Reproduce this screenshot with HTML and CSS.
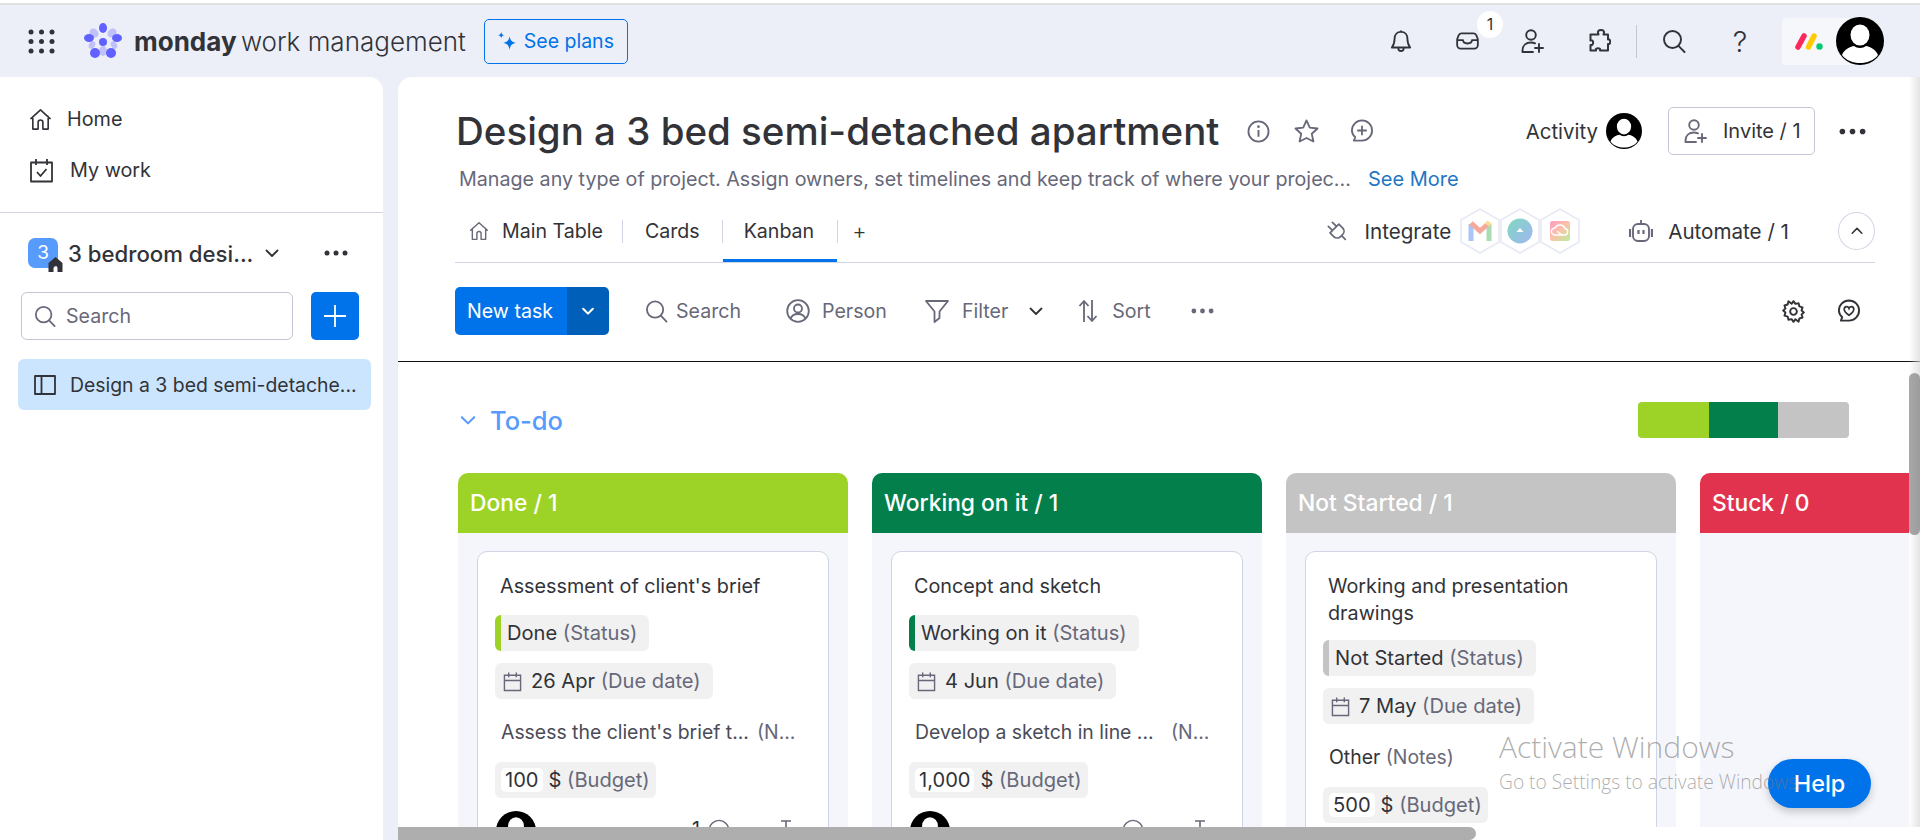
FILE: index.html
```html
<!DOCTYPE html>
<html lang="en">
<head>
  <meta charset="UTF-8">
  <title>monday work management</title>
  <link rel="stylesheet" href="styles.css">
</head>
<body>
  <svg class="defs" width="0" height="0">
    <symbol id="i-home" viewBox="0 0 24 24"><path d="M2 11 12 2l10 9M4 9v13h5.500v-7a2.500 2.500 0 0 1 5 0v7H20V9" fill="none" stroke="currentColor" stroke-width="1.700" stroke-linejoin="round" stroke-linecap="round"/></symbol>
    <symbol id="i-search" viewBox="0 0 24 24"><circle cx="10.500" cy="10.500" r="8.500" fill="none" stroke="currentColor" stroke-width="1.900"/><path d="m16.500 16.800 6 6.200" stroke="currentColor" stroke-width="1.900" stroke-linecap="round"/></symbol>
    <symbol id="i-dots" viewBox="0 0 24 6"><circle cx="3" cy="3" r="2.500" fill="currentColor"/><circle cx="12" cy="3" r="2.500" fill="currentColor"/><circle cx="21" cy="3" r="2.500" fill="currentColor"/></symbol>
    <symbol id="i-chev" viewBox="0 0 16 16"><path d="m2.500 5.500 5.500 5.500 5.500-5.500" fill="none" stroke="currentColor" stroke-width="1.800" stroke-linecap="round" stroke-linejoin="round"/></symbol>
    <symbol id="i-invite" viewBox="0 0 24 24"><circle cx="10" cy="6" r="4.800" fill="none" stroke="currentColor" stroke-width="1.900"/><path d="M1.500 23v-1.500C1.500 16.500 5 13.500 10 13.500c1.500 0 2.800.3 4 .8M1.500 23H12M18 15v8M14 19h8" fill="none" stroke="currentColor" stroke-width="1.900" stroke-linecap="round"/></symbol>
    <symbol id="i-user" viewBox="0 0 48 48"><circle cx="24" cy="24" r="24" fill="#000"/><ellipse cx="24" cy="18" rx="9.500" ry="10.500" fill="#fff"/><path d="M6 38c2-6 9-8.500 12-9 3 2.500 9 2.500 12 0 3 .5 10 3 12 9-4 5.500-11 8-18 8s-14-2.500-18-8z" fill="#fff"/></symbol>
    <symbol id="i-cal" viewBox="0 0 20 22"><path d="M1.500 4.500h17v16h-17zM1.500 10h17M6 1.500v5M14 1.500v5" fill="none" stroke="currentColor" stroke-width="1.500"/></symbol>
    <symbol id="i-hex" viewBox="0 0 40 46"><path d="M20 1 39 12v22L20 45 1 34V12z" fill="#fff" stroke="#e8eaf5" stroke-width="1.800"/></symbol>
  </svg>

  <div class="top-strip"></div>

  <header class="topbar">
    <svg class="apps" viewBox="0 0 27 25"><g fill="#323338"><circle cx="3" cy="3" r="2.500"/><circle cx="13.500" cy="3" r="2.500"/><circle cx="24" cy="3" r="2.500"/><circle cx="3" cy="12.500" r="2.500"/><circle cx="13.500" cy="12.500" r="2.500"/><circle cx="24" cy="12.500" r="2.500"/><circle cx="3" cy="22" r="2.500"/><circle cx="13.500" cy="22" r="2.500"/><circle cx="24" cy="22" r="2.500"/></g></svg>
    <svg class="brand-mark" viewBox="0 0 38 36">
      <g fill="#c0c0fb"><ellipse cx="10" cy="10" rx="4" ry="5" transform="rotate(-50 10 10)"/><ellipse cx="28" cy="10" rx="4" ry="5" transform="rotate(50 28 10)"/><ellipse cx="19" cy="28" rx="4" ry="5"/><ellipse cx="8" cy="22" rx="3" ry="4" transform="rotate(30 8 22)"/><ellipse cx="30" cy="22" rx="3" ry="4" transform="rotate(-30 30 22)"/></g>
      <g fill="#6161ff"><ellipse cx="19" cy="5" rx="4" ry="5"/><ellipse cx="5" cy="15" rx="5" ry="4"/><ellipse cx="33" cy="15" rx="5" ry="4"/><ellipse cx="11" cy="30" rx="5" ry="5"/><ellipse cx="27" cy="30" rx="5" ry="5"/><circle cx="19" cy="19" r="4"/></g>
    </svg>
    <div class="brand"><b>monday</b> work management</div>
    <button class="see-plans">
      <svg viewBox="0 0 20 20" width="21" height="21"><path d="M12 5c.8 4 2 5.300 6 6.300-4 1-5.200 2.400-6 6.700-.8-4.300-2-5.700-6-6.700 4-1 5.200-2.300 6-6.300zM4 1c.4 2 1 2.600 3 3-2 .4-2.600 1-3 3-.4-2-1-2.600-3-3 2-.4 2.600-1 3-3z" fill="#0073ea"/></svg>
      See plans
    </button>

    <div class="top-actions">
      <span class="top-icon"><svg viewBox="0 0 24 26" width="22" height="25"><path d="M12 2.500c-4.500 0-7 3.500-7 7.500 0 4.500-1 7-3 9.500h20c-2-2.500-3-5-3-9.500 0-4-2.500-7.500-7-7.500zM12 1v1.500M9 20c0 4.500 6 4.500 6 0" fill="none" stroke="currentColor" stroke-width="2" stroke-linejoin="round"/></svg></span>
      <span class="top-icon inbox">
        <svg viewBox="0 0 26 20" width="25" height="18"><path d="M6 1.500h14c1.500 0 2.300.8 3 2.500l1.500 4v6.500a4 4 0 0 1-4 4h-15a4 4 0 0 1-4-4V8L3 4c.7-1.700 1.500-2.500 3-2.500zM1.500 9H8c0 5 10 5 10 0h6.500" fill="none" stroke="currentColor" stroke-width="2" stroke-linejoin="round"/></svg>
        <span class="badge">1</span>
      </span>
      <span class="top-icon"><svg width="24" height="24"><use href="#i-invite"/></svg></span>
      <span class="top-icon"><svg viewBox="0 0 24 24" width="24" height="24"><path d="M9 5.500h2.500C10 2 12 1 14 1s4 1 2.500 4.500H21v5c3-1.500 3 6 0 4.500v6.500H13c1.500-3-5.500-3-4 0H3.500v-5.500C7 17 7 10 3.500 11.500V5.500z" fill="none" stroke="currentColor" stroke-width="2" stroke-linejoin="round"/></svg></span>
      <span class="top-sep"></span>
      <span class="top-icon"><svg width="24" height="24"><use href="#i-search"/></svg></span>
      <span class="top-icon help-mark">?</span>
      <div class="account">
        <svg class="account-logo" viewBox="0 0 28 17"><path d="M3 14 9 3" stroke="#fb275d" stroke-width="5.500" stroke-linecap="round"/><path d="M13.500 14 19 3" stroke="#ffcb00" stroke-width="5.500" stroke-linecap="round"/><circle cx="24.500" cy="13.500" r="3.200" fill="#00ca72"/></svg>
        <svg class="account-user"><use href="#i-user"/></svg>
      </div>
    </div>
  </header>

  <div class="layout">
    <aside class="sidebar">
      <a class="side-link">
        <svg width="23" height="23"><use href="#i-home"/></svg>
        Home
      </a>
      <a class="side-link work">
        <svg viewBox="0 0 25 25" width="25" height="25"><path d="M2 4.500h21v19H2zM7 1v6M18 1v6M8 14l3.500 4 6-7" fill="none" stroke="currentColor" stroke-width="1.800" stroke-linejoin="round"/></svg>
        My work
      </a>
      <div class="side-divider"></div>

      <div class="workspace">
        <span class="ws-badge">3
          <svg class="ws-home" viewBox="0 0 14 15"><path d="M7 0 14 6v9H9v-4a2 2 0 0 0-4 0v4H0V6z" fill="#323338"/></svg>
        </span>
        <span class="ws-name">3 bedroom desi...</span>
        <svg class="ws-chev" width="16" height="16"><use href="#i-chev"/></svg>
        <svg class="ws-dots" width="24" height="6"><use href="#i-dots"/></svg>
      </div>

      <div class="side-search">
        <div class="search-box">
          <svg width="22" height="24"><use href="#i-search"/></svg>
          Search
        </div>
        <button class="add-btn"><svg viewBox="0 0 24 24" width="24" height="24"><path d="M12 1v22M1 12h22" stroke="#fff" stroke-width="1.800"/></svg></button>
      </div>

      <div class="board-item">
        <svg viewBox="0 0 22 20" width="22" height="20"><path d="M1 1h20v18H1zM7.500 1v18" fill="none" stroke="currentColor" stroke-width="1.800" stroke-linejoin="round"/></svg>
        <span>Design a 3 bed semi-detache...</span>
      </div>
    </aside>

    <main class="main">
      <section class="board-head">
        <div class="title-row">
          <h1>Design a 3 bed semi-detached apartment</h1>
          <svg class="head-icon" viewBox="0 0 24 24" width="23" height="23"><circle cx="12" cy="12" r="10.500" fill="none" stroke="currentColor" stroke-width="1.900"/><path d="M12 10.500v7" stroke="currentColor" stroke-width="2"/><circle cx="12" cy="7" r="1.400" fill="currentColor"/></svg>
          <svg class="head-icon star" viewBox="0 0 26 25" width="25" height="24"><path d="m13 1.500 3.400 7.500 8.100.9-6 5.500 1.700 8L13 19.800l-7.200 3.600 1.700-8-6-5.500 8.100-.9z" fill="none" stroke="currentColor" stroke-width="1.900" stroke-linejoin="round"/></svg>
          <svg class="head-icon bubble" viewBox="0 0 24 25" width="24" height="24"><path d="M12 1.500a10.500 10.500 0 0 1 0 21H3.500l1.500-3.500C2.800 17 1.500 14.500 1.500 12A10.500 10.500 0 0 1 12 1.500zM12 7v10M7 12h10" fill="none" stroke="currentColor" stroke-width="1.900" stroke-linejoin="round"/></svg>
          <div class="title-actions">
            <span class="activity">Activity</span>
            <svg class="activity-user"><use href="#i-user"/></svg>
            <button class="invite-btn"><svg width="24" height="24"><use href="#i-invite"/></svg>Invite / 1</button>
            <svg class="more-dots" width="27" height="7"><use href="#i-dots"/></svg>
          </div>
        </div>
        <p class="description">
          <span>Manage any type of project. Assign owners, set timelines and keep track of where your projec...</span>
          <a>See More</a>
        </p>
        <nav class="tabs">
          <a class="tab first"><svg width="20" height="20"><use href="#i-home"/></svg>Main Table</a>
          <span class="tab-sep"></span>
          <a class="tab">Cards</a>
          <span class="tab-sep"></span>
          <a class="tab active">Kanban</a>
          <span class="tab-sep"></span>
          <a class="tab plus">+</a>

          <div class="tab-tools">
            <svg viewBox="0 0 24 24" width="23" height="23"><g transform="rotate(-45 12 12)" fill="none" stroke="currentColor" stroke-width="1.800" stroke-linecap="round" stroke-linejoin="round"><path d="M5.500 7.500h13V13a5 5 0 0 1-5 5h-3a5 5 0 0 1-5-5zM9 1.500v6M15 1.500v6M12 18v5.500"/></g></svg>
            <span class="tool-label">Integrate</span>
            <div class="hexes">
              <span class="hex"><svg viewBox="0 0 40 46"><use href="#i-hex"/><path d="M11 33V16" stroke="#a9c6f7" stroke-width="5"/><path d="M29 33V16" stroke="#a9dcb4" stroke-width="5"/><path d="m11 15 9 8 9-8" fill="none" stroke="#f5a99d" stroke-width="5"/><path d="m27 17 2.500-3" stroke="#fbdf8e" stroke-width="5"/></svg></span>
              <span class="hex"><svg viewBox="0 0 40 46"><defs><linearGradient id="g-drive" x1="0" y1="0" x2="1" y2="1"><stop offset="0" stop-color="#7fd8c0"/><stop offset="1" stop-color="#a0b6f3"/></linearGradient></defs><use href="#i-hex"/><ellipse cx="20" cy="23" rx="12.500" ry="12.500" fill="url(#g-drive)"/><path d="m20 20 3.500 4h-7z" fill="#fff"/></svg></span>
              <span class="hex"><svg viewBox="0 0 40 46"><defs><linearGradient id="g-cloud" x1="0" y1="0" x2="1" y2="1"><stop offset="0" stop-color="#fb9cc4"/><stop offset=".5" stop-color="#fbc3a8"/><stop offset="1" stop-color="#b6ef9c"/></linearGradient></defs><use href="#i-hex"/><rect x="10" y="13" width="20" height="20" rx="2.500" fill="url(#g-cloud)"/><path d="M15 27a3.500 3.500 0 0 1 0-7 5.500 5.500 0 0 1 10 .5 3.300 3.300 0 0 1 0 6.500zM17 23.500c2 0 3 3.500 6 3.500" fill="none" stroke="#fff" stroke-width="1.400"/></svg></span>
            </div>
            <svg class="robot" viewBox="0 0 24 22" width="24" height="22"><path d="M12 0v4" stroke="currentColor" stroke-width="1.800"/><rect x="4" y="4" width="16" height="17" rx="5" fill="none" stroke="currentColor" stroke-width="1.900"/><path d="M1 9v8M23 9v8" stroke="currentColor" stroke-width="2.200"/><path d="M9.500 10v4M14.500 10v4" stroke="currentColor" stroke-width="2.200"/></svg>
            <span class="tool-label">Automate / 1</span>
            <button class="collapse"><svg viewBox="0 0 16 16" width="14" height="14"><path d="m2.500 10.500 5.500-5.500 5.500 5.500" fill="none" stroke="#323338" stroke-width="1.800" stroke-linecap="round" stroke-linejoin="round"/></svg></button>
          </div>
        </nav>
      </section>

      <section class="toolbar">
        <div class="new-task"><span class="nt-label">New task</span><span class="nt-arrow"><svg width="14" height="14" viewBox="0 0 16 16"><path d="m2.500 5.500 5.500 5.500 5.500-5.500" fill="none" stroke="#fff" stroke-width="2.400" stroke-linecap="round" stroke-linejoin="round"/></svg></span></div>
        <a class="tool t-search"><svg width="23" height="24"><use href="#i-search"/></svg>Search</a>
        <a class="tool t-person"><svg viewBox="0 0 24 24" width="24" height="24"><circle cx="12" cy="12" r="10.800" fill="none" stroke="currentColor" stroke-width="1.800"/><circle cx="12" cy="9.500" r="4" fill="none" stroke="currentColor" stroke-width="1.800"/><path d="M4.500 20c1-3.500 4-5 7.500-5s6.500 1.500 7.500 5" fill="none" stroke="currentColor" stroke-width="1.800"/></svg>Person</a>
        <a class="tool t-filter"><svg viewBox="0 0 24 24" width="24" height="24"><path d="M1 2h22l-8.500 10.500V19L9.500 23V12.500z" fill="none" stroke="currentColor" stroke-width="1.800" stroke-linejoin="round"/></svg>Filter</a>
        <svg class="t-chev" width="16" height="16"><use href="#i-chev"/></svg>
        <a class="tool t-sort"><svg viewBox="0 0 20 24" width="20" height="24"><path d="M6 23V2M1.500 7 6 2l4.500 5M14 1v21M9.500 17l4.500 5 4.500-5" fill="none" stroke="currentColor" stroke-width="1.800" stroke-linejoin="round"/></svg>Sort</a>
        <svg class="t-dots" width="23" height="6"><use href="#i-dots"/></svg>
        <svg class="t-gear" viewBox="0 0 24 24" width="23" height="23"><path d="M12 1.200 14 4l3.300-.6.800 3.300 3.300 1-1 3.300 2.400 2-2.400 2 1 3.300-3.300 1-.8 3.300L14 20l-2 2.800L10 20l-3.300.6-.8-3.300-3.300-1 1-3.300-2.400-2 2.400-2-1-3.300 3.300-1 .8-3.300L10 4z" fill="none" stroke="#323338" stroke-width="2" stroke-linejoin="round"/><circle cx="12" cy="12" r="3.500" fill="none" stroke="#323338" stroke-width="2"/></svg>
        <svg class="t-feedback" viewBox="0 0 24 25" width="24" height="24"><path d="M12 1.500a10.500 10.500 0 0 1 0 21H3.500l1.500-3.500C2.800 17 1.500 14.500 1.500 12A10.500 10.500 0 0 1 12 1.500z" fill="none" stroke="#323338" stroke-width="2" stroke-linejoin="round"/><path d="M12 17c-3-2-5-4-5-6.200C7 9 8.300 8 9.500 8c1 0 2 .6 2.500 1.800C12.500 8.600 13.500 8 14.500 8 15.700 8 17 9 17 10.800 17 13 15 15 12 17z" fill="none" stroke="#323338" stroke-width="1.800"/></svg>
      </section>

      <section class="group-row">
        <svg class="group-chev" width="18" height="18"><use href="#i-chev"/></svg>
        <span class="group-name">To-do</span>
        <div class="group-progress"><span class="c-done"></span><span class="c-working"></span><span class="c-idle"></span></div>
      </section>

      <section class="columns">
        <div class="column">
          <div class="col-head c-done">Done / 1</div>
          <div class="col-body">
            <article class="card">
              <h3>Assessment of client's brief</h3>
              <div class="chip status"><i class="c-done"></i>Done&nbsp;<em>(Status)</em></div>
              <div class="chip date"><svg width="19" height="21"><use href="#i-cal"/></svg>26 Apr&nbsp;<em>(Due date)</em></div>
              <div class="note"><span class="note-text">Assess the client's brief t...</span><em>(N...</em></div>
              <div class="chip budget"><span class="amount">100</span>$&nbsp;<em>(Budget)</em></div>
              <div class="card-foot">
                <svg class="foot-user"><use href="#i-user"/></svg>
                <span class="foot-count">1</span>
                <svg class="foot-bubble" viewBox="0 0 24 24" width="22" height="22"><circle cx="12" cy="12" r="10.500" fill="none" stroke="#676879" stroke-width="1.600"/></svg>
                <svg class="foot-sub" viewBox="0 0 24 24" width="24" height="24"><path d="M1 2h10M6 2v18M13 9h10v10H13z" fill="none" stroke="#676879" stroke-width="1.600"/></svg>
              </div>
            </article>
          </div>
        </div>

        <div class="column">
          <div class="col-head c-working">Working on it / 1</div>
          <div class="col-body">
            <article class="card">
              <h3>Concept and sketch</h3>
              <div class="chip status"><i class="c-working"></i>Working on it&nbsp;<em>(Status)</em></div>
              <div class="chip date"><svg width="19" height="21"><use href="#i-cal"/></svg>4 Jun&nbsp;<em>(Due date)</em></div>
              <div class="note"><span class="note-text">Develop a sketch in line ...</span><em>(N...</em></div>
              <div class="chip budget"><span class="amount">1,000</span>$&nbsp;<em>(Budget)</em></div>
              <div class="card-foot">
                <svg class="foot-user"><use href="#i-user"/></svg>
                <span class="foot-count"></span>
                <svg class="foot-bubble" viewBox="0 0 24 24" width="22" height="22"><circle cx="12" cy="12" r="10.500" fill="none" stroke="#676879" stroke-width="1.600"/></svg>
                <svg class="foot-sub" viewBox="0 0 24 24" width="24" height="24"><path d="M1 2h10M6 2v18M13 9h10v10H13z" fill="none" stroke="#676879" stroke-width="1.600"/></svg>
              </div>
            </article>
          </div>
        </div>

        <div class="column">
          <div class="col-head c-idle">Not Started / 1</div>
          <div class="col-body">
            <article class="card">
              <h3>Working and presentation drawings</h3>
              <div class="chip status"><i class="c-idle"></i>Not Started&nbsp;<em>(Status)</em></div>
              <div class="chip date"><svg width="19" height="21"><use href="#i-cal"/></svg>7 May&nbsp;<em>(Due date)</em></div>
              <div class="note">Other&nbsp;<em>(Notes)</em></div>
              <div class="chip budget"><span class="amount">500</span>$&nbsp;<em>(Budget)</em></div>
            </article>
          </div>
        </div>

        <div class="column">
          <div class="col-head c-stuck">Stuck / 0</div>
          <div class="col-body"></div>
        </div>
      </section>

      <div class="vscroll"><span></span></div>
      <div class="hscroll"><span></span></div>
    </main>
  </div>

  <button class="help-btn">Help</button>
  <div class="watermark">
    <div class="wm-title">Activate Windows</div>
    <div class="wm-sub">Go to Settings to activate Windows.</div>
  </div>
</body>
</html>
```

FILE: styles.css
```css
* {
  box-sizing: border-box;
}

body {
  margin: 0;
  height: 840px;
  overflow: hidden;
  background-color: #eceff8;
  color: #323338;
  font-family: 'Inter', 'Noto Sans', sans-serif;
  font-size: 19.6px;
  position: relative;
}

button {
  font: inherit;
  color: inherit;
  background: none;
  border: none;
  padding: 0;
}

em {
  font-style: normal;
  color: #676879;
}

h1, h3, p {
  margin: 0;
  font-weight: 400;
}

.defs {
  position: absolute;
}

.top-strip {
  height: 5px;
  background-color: #fff;
  border-bottom: 2px solid #e1e1e1;
}

/* top bar */
.topbar {
  height: 72px;
  display: flex;
  align-items: center;
  padding: 0 36px 0 28px;
}

.apps {
  width: 27px;
  height: 25px;
  margin-right: 29px;
}

.brand-mark {
  width: 38px;
  height: 36px;
  margin-right: 12px;
}

.brand {
  font-size: 26px;
  font-weight: 300;
  white-space: nowrap;
  margin-right: 18px;
}

.brand b {
  font-weight: 700;
  margin-right: -3px;
}

.see-plans {
  width: 144px;
  height: 45px;
  border: 1px solid #0073ea;
  border-radius: 5px;
  color: #0073ea;
  display: flex;
  align-items: center;
  gap: 6px;
  padding-left: 12px;
  font-size: 19.5px;
}

.top-actions {
  margin-left: auto;
  display: flex;
  align-items: center;
}

.top-icon {
  width: 66px;
  display: flex;
  justify-content: center;
  align-items: center;
  position: relative;
}

.inbox .badge {
  position: absolute;
  left: 43px;
  top: -21px;
  width: 26px;
  height: 27px;
  border-radius: 50%;
  background-color: #fff;
  font-size: 16px;
  text-align: center;
  line-height: 26px;
}

.top-sep {
  width: 1px;
  height: 33px;
  background-color: #c3c6d4;
  margin: 0 4px;
}

.help-mark {
  font-size: 29px;
  font-weight: 300;
}

.account {
  width: 102px;
  height: 47px;
  margin-left: 9px;
  display: flex;
  align-items: center;
  justify-content: space-between;
  padding-left: 13px;
  background: linear-gradient(90deg, #f6f7fb 76%, transparent 76%);
  border-radius: 4px;
}

.account-logo {
  width: 28px;
  height: 17px;
}

.account-user {
  width: 48px;
  height: 48px;
}

.layout {
  display: flex;
  gap: 15px;
  height: 763px;
}

/* sidebar */
.sidebar {
  width: 383px;
  background-color: #fff;
  border-radius: 0 14px 0 0;
  padding-top: 22px;
}

.side-link {
  height: 40px;
  display: flex;
  align-items: center;
  gap: 15px;
  padding-left: 29px;
  font-size: 19.8px;
}

.side-link.work {
  gap: 16px;
  margin-top: 11px;
}

.side-divider {
  height: 1px;
  background-color: #d0d4e4;
  margin-top: 22px;
}

.workspace {
  height: 32px;
  margin-top: 24px;
  padding-left: 28px;
  display: flex;
  align-items: center;
}

.ws-badge {
  width: 30px;
  height: 30px;
  border-radius: 7px;
  background-color: #579bfc;
  color: #fff;
  font-size: 19px;
  text-align: center;
  line-height: 30px;
  position: relative;
}

.ws-home {
  position: absolute;
  left: 20px;
  top: 19px;
  width: 15px;
  height: 15px;
}

.ws-name {
  font-size: 22.2px;
  font-weight: 500;
  margin-left: 10px;
  white-space: nowrap;
}

.ws-chev {
  margin-left: 11px;
}

.ws-dots {
  margin-left: 44px;
}

.side-search {
  display: flex;
  gap: 18px;
  margin-top: 23px;
  padding-left: 21px;
}

.search-box {
  width: 272px;
  height: 48px;
  border: 1px solid #c3c6d4;
  border-radius: 6px;
  display: flex;
  align-items: center;
  gap: 10px;
  padding-left: 12px;
  color: #676879;
}

.add-btn {
  width: 48px;
  height: 48px;
  background-color: #0073ea;
  border-radius: 5px;
  display: flex;
  align-items: center;
  justify-content: center;
}

.board-item {
  width: 353px;
  height: 51px;
  margin: 19px 0 0 18px;
  background-color: #cce5ff;
  border-radius: 6px;
  display: flex;
  align-items: center;
  gap: 14px;
  padding-left: 16px;
  white-space: nowrap;
  font-size: 19.4px;
}

/* board */
.main {
  flex: 1;
  min-width: 0;
  background-color: #fff;
  border-radius: 14px 0 0 0;
  position: relative;
  overflow: hidden;
}

.board-head {
  padding: 30px 45px 0 57px;
}

.title-row {
  height: 48px;
  display: flex;
  align-items: center;
  padding-left: 1px;
  color: #676879;
}

h1 {
  font-size: 38.5px;
  font-weight: 500;
  color: #323338;
  white-space: nowrap;
  margin-right: 28px;
}

.head-icon.star {
  margin-left: 24px;
}

.head-icon.bubble {
  margin-left: 31px;
}

.title-actions {
  margin-left: auto;
  display: flex;
  align-items: center;
  color: #323338;
  font-size: 20.4px;
}

.activity {
  margin-right: 8px;
}

.activity-user {
  width: 36px;
  height: 36px;
  margin-right: 26px;
}

.invite-btn {
  width: 147px;
  height: 48px;
  border: 1px solid #c3c6d4;
  border-radius: 5px;
  color: #323338;
  display: flex;
  align-items: center;
  gap: 15px;
  padding-left: 15px;
  font-size: 20px;
}

.invite-btn svg {
  color: #676879;
}

.more-dots {
  margin: 0 9px 0 24px;
}

.description {
  margin-top: 12px;
  height: 24px;
  padding-left: 4px;
  line-height: 24px;
  display: flex;
  align-items: center;
  gap: 17px;
  color: #676879;
  font-size: 19.7px;
}

.description span {
  white-space: nowrap;
}

.description a {
  color: #1f76c2;
  font-size: 20px;
}

.tabs {
  height: 55px;
  margin-top: 17px;
  display: flex;
  border-bottom: 1px solid #d0d4e4;
}

.tab {
  display: flex;
  align-items: center;
  gap: 13px;
  height: 54px;
  padding: 0 22px 6px;
  border-bottom: 3px solid transparent;
}

.tab.first {
  padding-left: 14px;
  padding-right: 19px;
  color: #323338;
}

.tab.first svg {
  color: #676879;
}

.tab.active {
  border-bottom-color: #0073ea;
  padding: 0 23px 6px 21px;
}

.tab.plus {
  font-size: 22px;
  font-weight: 300;
  padding: 0 0 6px 14px;
}

.tab-sep {
  width: 1px;
  height: 23px;
  margin-top: 12px;
  background-color: #d0d4e4;
}

.tab-tools {
  margin-left: auto;
  display: flex;
  align-items: center;
  height: 46px;
  color: #676879;
}

.tool-label {
  color: #323338;
  margin-left: 15px;
  font-size: 20.6px;
}

.hexes {
  display: flex;
  margin: 0 49px 0 9px;
}

.hex svg {
  width: 40px;
  height: 46px;
  display: block;
}

.collapse {
  width: 37px;
  height: 38px;
  margin-left: 49px;
  border: 1px solid #d0d4e4;
  border-radius: 50%;
  display: flex;
  align-items: center;
  justify-content: center;
}

/* toolbar */
.toolbar {
  height: 99px;
  border-bottom: 1px solid #111;
  padding: 0 59px 2px 57px;
  display: flex;
  align-items: center;
}

.new-task {
  width: 154px;
  height: 48px;
  display: flex;
  color: #fff;
  border-radius: 5px;
  overflow: hidden;
  margin-right: 36px;
}

.nt-label {
  width: 112px;
  background-color: #0073ea;
  line-height: 48px;
  padding-left: 12px;
}

.nt-arrow {
  flex: 1;
  background-color: #0060b9;
  display: flex;
  align-items: center;
  justify-content: center;
}

.tool {
  display: flex;
  align-items: center;
  gap: 8px;
  color: #676879;
}

.t-person {
  margin-left: 45px;
  gap: 12px;
}

.t-filter {
  margin-left: 38px;
  gap: 13px;
}

.t-chev {
  margin-left: 20px;
}

.t-sort {
  margin-left: 34px;
  gap: 14px;
}

.t-dots {
  margin-left: 40px;
  color: #676879;
}

.t-gear {
  margin-left: auto;
}

.t-feedback {
  margin-left: 32px;
}

.group-row {
  height: 36px;
  margin-top: 40px;
  padding: 0 71px 0 61px;
  display: flex;
  align-items: center;
  gap: 13px;
}

.group-chev {
  color: #579bfc;
}

.group-name {
  color: #579bfc;
  font-size: 25.5px;
  font-weight: 500;
}

.group-progress {
  margin-left: auto;
  display: flex;
  border-radius: 4px;
  overflow: hidden;
}

.group-progress span {
  width: 71px;
  height: 36px;
}

.group-progress span:nth-child(2) {
  width: 69px;
}

.c-done { background-color: #9cd326; }
.c-working { background-color: #037f4c; }
.c-idle { background-color: #c4c4c4; }
.c-stuck { background-color: #e2334e; }

/* kanban columns */
.columns {
  display: flex;
  gap: 24px;
  margin: 35px 11px 0 60px;
  height: 354px;
  overflow: hidden;
}

.column {
  flex: 0 0 390px;
  display: flex;
  flex-direction: column;
}

.col-head {
  height: 60px;
  flex: none;
  border-radius: 10px 10px 0 0;
  color: #fff;
  font-weight: 500;
  padding-left: 12px;
  line-height: 60px;
  font-size: 22.8px;
}

.col-body {
  flex: 1;
  background-color: #f5f6fb;
  padding: 18px 19px 0;
}

.card {
  height: 330px;
  background-color: #fff;
  border: 1px solid #d0d4e4;
  border-radius: 10px;
  padding: 21px 17px 0;
}

.card h3 {
  font-size: 19.8px;
  line-height: 27px;
  min-height: 29px;
  padding-left: 5px;
  margin-bottom: 13px;
}

.chip {
  display: flex;
  width: fit-content;
  align-items: center;
  height: 36px;
  background-color: #f1f1f1;
  border-radius: 6px;
  white-space: nowrap;
  padding-right: 12px;
  font-size: 20.1px;
}

.chip.status {
  overflow: hidden;
}

.chip.status i {
  width: 6px;
  height: 36px;
  margin-right: 6px;
}

.chip.date {
  margin-top: 12px;
  padding-left: 8px;
}

.chip.date svg {
  margin-right: 9px;
  color: #676879;
}

.note {
  margin-top: 20px;
  height: 27px;
  line-height: 27px;
  padding-left: 6px;
  white-space: nowrap;
  display: flex;
  font-size: 19.4px;
}

.note-text {
  color: #4a4b57;
  width: 256px;
}

.chip.budget {
  margin-top: 16px;
  padding-right: 6px;
}

.amount {
  background-color: #fff;
  height: 24px;
  line-height: 24px;
  margin: 0 6px;
  padding: 0 4px;
  border-radius: 5px;
}

.card-foot {
  margin-top: 13px;
  display: flex;
  align-items: flex-start;
  padding-left: 1px;
}

.foot-user {
  width: 40px;
  height: 40px;
}

.foot-count {
  margin: 6px 0 0 156px;
  width: 16px;
}

.foot-bubble {
  margin-top: 8px;
}

.foot-sub {
  margin: 8px 0 0 50px;
}

/* scrollbars sit over the board */
.vscroll {
  position: absolute;
  right: 0;
  top: 0;
  bottom: 0;
  width: 11px;
  background: linear-gradient(90deg, rgba(255, 255, 255, 0), rgba(215, 215, 215, 0.7));
}

.vscroll span {
  display: block;
  height: 162px;
  margin-top: 296px;
  background: linear-gradient(90deg, #a8a8a8, #9c9c9c);
  border-radius: 6px;
}

.hscroll {
  position: absolute;
  left: 0;
  right: 0;
  bottom: 0;
  height: 13px;
  background-color: #fff;
}

.hscroll span {
  display: block;
  width: 1078px;
  height: 13px;
  background-color: #aeaeae;
  border-radius: 0 8px 8px 0;
}

/* floating bits */
.help-btn {
  position: absolute;
  left: 1768px;
  top: 759px;
  width: 103px;
  height: 49px;
  background-color: #0073ea;
  color: #fff;
  border-radius: 25px;
  font-size: 23.4px;
  font-weight: 500;
  box-shadow: 0 4px 8px rgba(0, 0, 0, 0.2);
}

.watermark {
  position: absolute;
  left: 1499px;
  top: 728px;
  font-family: 'Open Sans', sans-serif;
  font-weight: 300;
  color: rgba(120, 120, 120, 0.6);
  white-space: nowrap;
  pointer-events: none;
}

.wm-title {
  font-size: 30px;
  line-height: 38px;
}

.wm-sub {
  font-size: 19.2px;
  line-height: 26px;
  margin-top: 3px;
}
```
